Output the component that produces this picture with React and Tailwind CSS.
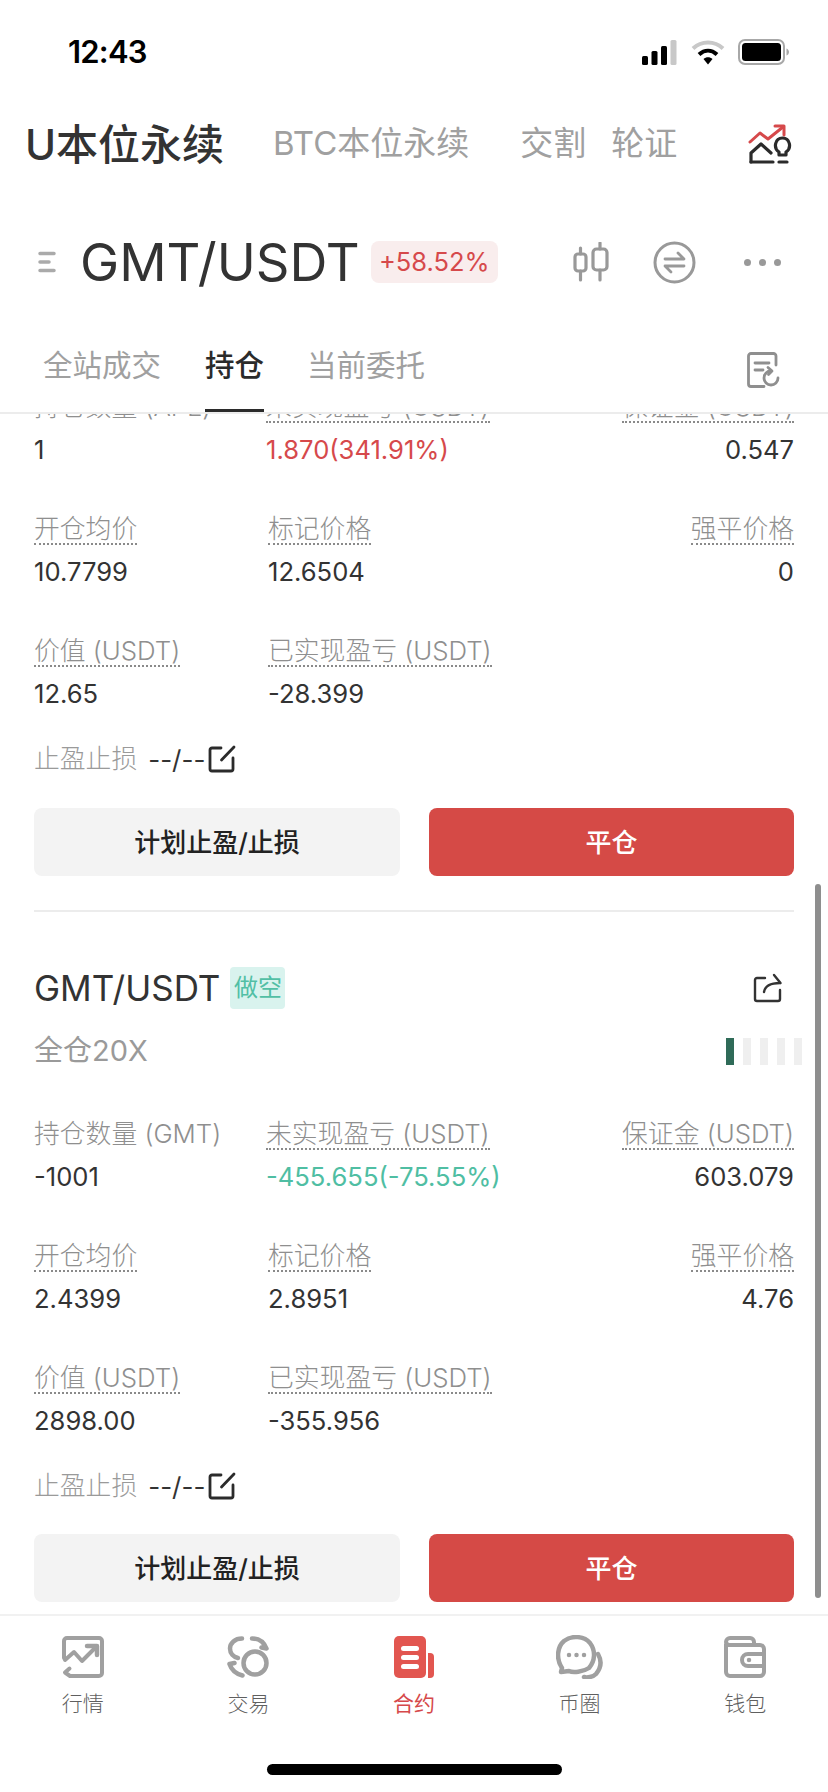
import React from "react";

const cards = [
  {
    rows: [
      [
        { label: "持仓数量 (APE)", value: "1", plain: true },
        { label: "未实现盈亏 (USDT)", value: "1.870(341.91%)", tone: "text-[#d6494b]", shift: "-ml-[2px]" },
        { label: "保证金 (USDT)", value: "0.547" },
      ],
      [
        { label: "开仓均价", value: "10.7799" },
        { label: "标记价格", value: "12.6504" },
        { label: "强平价格", value: "0" },
      ],
      [
        { label: "价值 (USDT)", value: "12.65" },
        { label: "已实现盈亏 (USDT)", value: "-28.399" },
      ],
    ],
  },
  {
    rows: [
      [
        { label: "持仓数量 (GMT)", value: "-1001", plain: true },
        { label: "未实现盈亏 (USDT)", value: "-455.655(-75.55%)", tone: "text-[#4fbea3]", shift: "-ml-[2px]" },
        { label: "保证金 (USDT)", value: "603.079" },
      ],
      [
        { label: "开仓均价", value: "2.4399" },
        { label: "标记价格", value: "2.8951" },
        { label: "强平价格", value: "4.76" },
      ],
      [
        { label: "价值 (USDT)", value: "2898.00" },
        { label: "已实现盈亏 (USDT)", value: "-355.956" },
      ],
    ],
  },
];

const Metric = ({ label, value, tone, plain, shift, right }) => (
  <div className={`flex flex-col ${right ? "items-end" : "items-start"} ${shift || ""}`}>
    <span
      className={`h-[33px] leading-[33px] text-[25.8px] font-light whitespace-nowrap text-[#8f8f8f] ${
        plain ? "" : "border-b-2 border-dotted border-[#8a8a8a]"
      }`}
    >
      {label}
    </span>
    <span className={`mt-[9px] h-[36px] leading-[36px] text-[25.6px] whitespace-nowrap ${tone || "text-[#333333]"}`}>
      {value}
    </span>
  </div>
);

const EditIcon = () => (
  <svg width="28" height="28" viewBox="0 0 28 28" fill="none" stroke="#2b2b2b" strokeWidth="2.8" strokeLinecap="round" strokeLinejoin="round">
    <path d="M13 3H4a2 2 0 0 0-2 2v19a2 2 0 0 0 2 2h19a2 2 0 0 0 2-2v-11" />
    <path d="M26 2 13.5 15" />
  </svg>
);

const ShareIcon = () => (
  <svg width="30" height="30" viewBox="0 0 30 30" fill="none" stroke="#333333" strokeWidth="2.4" strokeLinecap="round" strokeLinejoin="round">
    <path d="M12 5H4a2 2 0 0 0-2 2v19a2 2 0 0 0 2 2h21a2 2 0 0 0 2-2v-9" />
    <path d="M11 19c1-6 6-9 16-9" />
    <path d="M21 2l6.5 8" />
  </svg>
);

const Actions = ({ top = "mt-[29px]" }) => (
  <div className={`${top} grid grid-cols-[366px_365px] gap-x-[29px]`}>
    <div className="h-[68px] rounded-lg bg-[#f3f3f3] flex items-center justify-center text-[26px] font-medium text-[#222222]">
      计划止盈/止损
    </div>
    <div className="h-[68px] rounded-lg bg-[#d54a46] flex items-center justify-center text-[26px] font-medium text-white">
      平仓
    </div>
  </div>
);

const MetricRows = ({ rows }) => (
  <div className="flex flex-col gap-y-[44px]">
    {rows.map((row, i) => (
      <div key={i} className="grid grid-cols-[234px_1fr_auto]">
        {row.map((m, j) => (
          <Metric key={j} {...m} right={j === 2} />
        ))}
      </div>
    ))}
  </div>
);

const StopRow = () => (
  <div className="mt-[27px] h-[40px] flex items-center">
    <span className="text-[25.8px] font-light text-[#9a9a9a]">止盈止损</span>
    <span className="ml-[11px] text-[26px] text-[#333333]">--/--</span>
    <span className="ml-[3px] flex">
      <EditIcon />
    </span>
  </div>
);

const StatusBar = () => (
  <div className="h-[104px] flex items-center justify-between pl-[68px] pr-[39px]">
    <span className="text-[31px] font-semibold text-black tracking-tight">12:43</span>
    <div className="flex items-center gap-[13px]">
      <svg width="36" height="25" viewBox="0 0 36 25">
        <rect x="0" y="16" width="6" height="9" rx="1.5" fill="#000" />
        <rect x="9.500" y="11" width="6" height="14" rx="1.5" fill="#000" />
        <rect x="19" y="6" width="6" height="19" rx="1.5" fill="#000" />
        <rect x="28.500" y="0" width="6" height="25" rx="1.5" fill="#c8c8c8" />
      </svg>
      <svg width="34" height="25" viewBox="0 0 34 25" fill="none" strokeLinecap="butt">
        <path d="M2 8.500C10.500 0.500 23.500 0.500 32 8.500" stroke="#c8c8c8" strokeWidth="4" />
        <path d="M8 14.500C13.500 9.500 20.500 9.500 26 14.500" stroke="#000" strokeWidth="4" />
        <path d="M12.500 19 17 24.500 21.500 19C19 16.500 15 16.500 12.500 19Z" fill="#000" />
      </svg>
      <svg width="51" height="26" viewBox="0 0 51 26">
        <rect x="1" y="1" width="45" height="24" rx="6" fill="none" stroke="#a8a8a8" strokeWidth="2" />
        <rect x="4" y="4" width="39" height="18" rx="3.500" fill="#000" />
        <path d="M48.500 9.500c1.500.5 2.500 2 2.500 3.500s-1 3-2.500 3.500Z" fill="#a8a8a8" />
      </svg>
    </div>
  </div>
);

const TopTabs = () => (
  <div className="h-[78px] flex items-center pl-[25px] pr-[36px] pt-[2px]">
    <span className="text-[42px] font-medium text-[#333333] whitespace-nowrap">U本位永续</span>
    <span className="ml-[49px] text-[33px] text-[#a0a0a0] whitespace-nowrap">BTC本位永续</span>
    <span className="ml-[51px] text-[33px] text-[#a0a0a0]">交割</span>
    <span className="ml-[25px] text-[33px] text-[#a0a0a0]">轮证</span>
    <svg className="ml-auto" width="44" height="40" viewBox="0 0 44 40" fill="none" strokeLinecap="round" strokeLinejoin="round">
      <path d="M2 18 12 9l8 6L35 3" stroke="#d6494b" strokeWidth="3" />
      <path d="M27 2h9v9" stroke="#d6494b" strokeWidth="3" />
      <path d="M3 38v-9l10-9 10 9" stroke="#2b2b2b" strokeWidth="3.200" />
      <path d="M3 38h22" stroke="#2b2b2b" strokeWidth="3.200" />
      <path d="M31 31v-3c-6-4-4-14 3.500-14S44 24 38 28v3Z" stroke="#2b2b2b" strokeWidth="3.200" />
      <path d="M31 38h8" stroke="#2b2b2b" strokeWidth="3.200" />
    </svg>
  </div>
);

const PairRow = () => (
  <div className="h-[160px] flex items-center pl-[38px] pr-[47px]">
    <svg width="18" height="22" viewBox="0 0 18 22" stroke="#aaaaaa" strokeWidth="3.500" strokeLinecap="round">
      <path d="M2 2.500h14M2 11h9M2 19.500h14" />
    </svg>
    <span className="ml-[24px] text-[52.5px] text-[#333333] whitespace-nowrap">GMT/USDT</span>
    <span className="ml-[11px] h-[42px] w-[127px] rounded-lg bg-[#f9eded] flex items-center justify-center text-[25.5px] text-[#d6494b]">
      +58.52%
    </span>
    <svg className="ml-[75px]" width="37" height="40" viewBox="0 0 37 40" fill="none" stroke="#999999" strokeWidth="3.200" strokeLinecap="round" strokeLinejoin="round">
      <rect x="2" y="12" width="11" height="17" rx="3" />
      <path d="M7.500 6v6M7.500 29v9" />
      <rect x="20" y="7" width="14" height="21" rx="3.500" />
      <path d="M27 1v6M27 28v10" />
    </svg>
    <svg className="ml-[43px]" width="43" height="43" viewBox="0 0 43 43" fill="none" stroke="#999999" strokeLinecap="round" strokeLinejoin="round">
      <circle cx="21.500" cy="21.500" r="19.500" strokeWidth="3" />
      <path d="M12 18h19l-6-6" strokeWidth="2.800" />
      <path d="M31 25H12l6 6" strokeWidth="2.800" />
    </svg>
    <div className="ml-auto flex gap-[8px]">
      <span className="w-[7px] h-[7px] rounded-full bg-[#999999]" />
      <span className="w-[7px] h-[7px] rounded-full bg-[#999999]" />
      <span className="w-[7px] h-[7px] rounded-full bg-[#999999]" />
    </div>
  </div>
);

const OrderTabs = () => (
  <div className="h-[70px] flex pl-[43px] pr-[47px]">
    <span className="h-[46px] leading-[46px] text-[29.5px] text-[#a0a0a0]">全站成交</span>
    <div className="ml-[44px] w-[59px] flex flex-col justify-between">
      <span className="h-[46px] leading-[46px] text-[29.5px] font-medium text-[#2b2b2b] whitespace-nowrap">持仓</span>
      <span className="h-[3px] bg-[#2b2b2b]" />
    </div>
    <span className="ml-[43px] h-[46px] leading-[46px] text-[29.5px] text-[#a0a0a0]">当前委托</span>
    <svg className="ml-auto mt-[10px]" width="34" height="36" viewBox="0 0 34 36" fill="none" stroke="#8f8f8f" strokeWidth="2.800" strokeLinecap="round" strokeLinejoin="round">
      <path d="M29 13V4a2.500 2.500 0 0 0-2.500-2.500H4A2.500 2.500 0 0 0 1.500 4v28A2.500 2.500 0 0 0 4 34.500h13" />
      <path d="M8 11h14M8 18h8" />
      <path d="M31 26a7 7 0 1 1-7-7" />
      <path d="M21 15.500 25 19l-3.500 3.500" />
    </svg>
  </div>
);

// bottom navigation glyphs, all on a 42px box
const NavMarket = () => (
  <svg width="42" height="42" viewBox="0 0 42 42" fill="none" stroke="#a0a0a0" strokeWidth="4" strokeLinecap="round" strokeLinejoin="round">
    <path d="M2 22V5a3 3 0 0 1 3-3h32a3 3 0 0 1 3 3v32a3 3 0 0 1-3 3H8l-5-3.500 4.500-4" />
    <path d="M3 24l9-8 8 9 14-14" />
    <path d="M25 10h10v9" strokeWidth="4.500" />
  </svg>
);

const NavTrade = () => (
  <svg width="42" height="42" viewBox="0 0 42 42" fill="none" stroke="#a0a0a0" strokeWidth="4.500" strokeLinecap="round" strokeLinejoin="round">
    <circle cx="28" cy="27" r="11.500" />
    <path d="M15 2.500C8 2.500 3 7 3 12.500c0 5 3.500 8.500 8 9.500" />
    <path d="M25 2.500c7 0 12 4 14.500 10l-5-1" />
    <path d="M2.500 28l5-1M2.500 28c2 6 7 10 13 11.500" />
  </svg>
);

const NavContract = () => (
  <svg width="40" height="42" viewBox="0 0 40 42">
    <rect x="0" y="0" width="32" height="42" rx="5" fill="#e25650" />
    <rect x="7" y="10" width="18" height="5" rx="2.500" fill="#ffffff" />
    <rect x="7" y="19" width="18" height="5" rx="2.500" fill="#ffffff" />
    <rect x="7" y="28" width="18" height="5" rx="2.500" fill="#ffffff" />
    <path d="M34 17h2a4 4 0 0 1 4 4v17a4 4 0 0 1-4 4h-2Z" fill="#e25650" />
  </svg>
);

const NavSocial = () => (
  <svg width="48" height="44" viewBox="0 0 48 44" fill="none" stroke="#a0a0a0" strokeWidth="4.500" strokeLinecap="round" strokeLinejoin="round">
    <path d="M6 33C0 24 1 12 8 6c8-6 20-5 26 2 6 8 5 18-1 25-6 4-16 5-20 3l-8 1Z" />
    <path d="M42 19c4 7 3 14-2 20-3 3-9 4-12 3" />
    <circle cx="13" cy="20" r="1.500" fill="#a0a0a0" strokeWidth="1.500" />
    <circle cx="20.500" cy="20" r="1.500" fill="#a0a0a0" strokeWidth="1.500" />
    <circle cx="28" cy="20" r="1.500" fill="#a0a0a0" strokeWidth="1.500" />
  </svg>
);

const NavWallet = () => (
  <svg width="42" height="42" viewBox="0 0 42 42" fill="none" stroke="#a0a0a0" strokeWidth="4" strokeLinecap="round" strokeLinejoin="round">
    <path d="M2 8v28a4 4 0 0 0 4 4h30a4 4 0 0 0 4-4V13a4 4 0 0 0-4-4H6a4 4 0 0 1-4-3c0-2 2-4 4-4h20a4 4 0 0 1 4 4v3" />
    <path d="M40 18H24a5 5 0 0 0 0 12h16" />
    <circle cx="25" cy="24" r="1.500" fill="#a0a0a0" strokeWidth="1.500" />
  </svg>
);

const navItems = [
  { label: "行情", Icon: NavMarket },
  { label: "交易", Icon: NavTrade },
  { label: "合约", Icon: NavContract, active: true },
  { label: "币圈", Icon: NavSocial },
  { label: "钱包", Icon: NavWallet },
];

const BottomNav = () => (
  <div className="h-[178px] border-t-2 border-[#f1f1f1] grid grid-cols-5 items-start pt-[20px]">
    {navItems.map(({ label, Icon, active }) => (
      <div key={label} className="flex flex-col items-center">
        <div className="h-[42px] flex items-center">
          <Icon />
        </div>
        <span className={`mt-[11px] h-[30px] leading-[30px] text-[21px] ${active ? "text-[#d6494b]" : "font-light text-[#5f5f5f]"}`}>
          {label}
        </span>
      </div>
    ))}
  </div>
);

export default function App() {
  return (
    <div className="relative w-[828px] h-[1792px] overflow-hidden bg-white flex flex-col font-['Inter','Noto_Sans_CJK_SC',sans-serif]">
      <StatusBar />
      <TopTabs />
      <PairRow />
      <OrderTabs />

      {/* scrolling position list, clipped under the tabs */}
      <div className="relative flex-1 min-h-0 overflow-hidden border-t-2 border-[#ececec] px-[34px]">
        <div className="-mt-[24px]">
          <MetricRows rows={cards[0].rows} />
          <StopRow />
          <Actions />
          <div className="mt-[34px] h-[2px] bg-[#ececec]" />

          <div className="mt-[55px] h-[42px] flex items-center">
            <span className="text-[35px] text-[#333333]">GMT/USDT</span>
            <span className="ml-[10px] w-[55px] h-[42px] rounded bg-[#d9f3ee] flex items-center justify-center text-[24px] text-[#52bfa5]">
              做空
            </span>
            <span className="ml-auto mr-[11px] flex">
              <ShareIcon />
            </span>
          </div>
          <div className="mt-[22px] h-[40px] flex items-center justify-between">
            <span className="text-[29px] text-[#9a9a9a]">全仓20X</span>
            <div className="flex gap-[9px] -mr-[8px]">
              <span className="w-[8px] h-[27px] bg-[#2f6b58]" />
              <span className="w-[8px] h-[27px] bg-[#efefef]" />
              <span className="w-[8px] h-[27px] bg-[#efefef]" />
              <span className="w-[8px] h-[27px] bg-[#efefef]" />
              <span className="w-[8px] h-[27px] bg-[#efefef]" />
            </div>
          </div>
          <div className="mt-[46px]">
            <MetricRows rows={cards[1].rows} />
          </div>
          <StopRow />
          <Actions top="mt-[28px]" />
        </div>

        <div className="absolute right-[7px] top-[470px] w-[6px] h-[714px] rounded-full bg-[#8e8e8e]" />
      </div>

      <BottomNav />
      <div className="absolute bottom-[17px] left-[267px] w-[295px] h-[11px] rounded-full bg-black" />
    </div>
  );
}
